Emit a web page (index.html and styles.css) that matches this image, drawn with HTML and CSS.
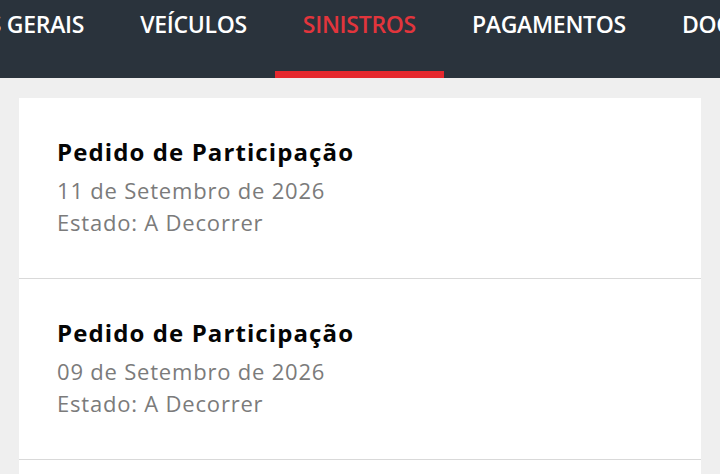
FILE: index.html
```html
<!DOCTYPE html>
<html lang="pt">
<head>
<meta charset="utf-8">
<title>Sinistros</title>
<link rel="stylesheet" href="styles.css">
</head>
<body>
<nav class="tabs">
  <div class="tab-strip">
    <a class="tab">DADOS GERAIS</a>
    <a class="tab">VEÍCULOS</a>
    <a class="tab active">SINISTROS</a>
    <a class="tab">PAGAMENTOS</a>
    <a class="tab">DOCUMENTOS</a>
  </div>
</nav>
<main class="content">
  <section class="card">
    <article class="item">
      <h2 class="item-title">Pedido de Participação</h2>
      <p class="item-line">11 de Setembro de 2026</p>
      <p class="item-line">Estado: A Decorrer</p>
    </article>
    <article class="item">
      <h2 class="item-title">Pedido de Participação</h2>
      <p class="item-line">09 de Setembro de 2026</p>
      <p class="item-line">Estado: A Decorrer</p>
    </article>
    <article class="item">
      <h2 class="item-title">Pedido de Participação</h2>
      <p class="item-line">02 de Setembro de 2026</p>
      <p class="item-line">Estado: A Decorrer</p>
    </article>
  </section>
</main>
</body>
</html>
```

FILE: styles.css
```css
* { box-sizing: border-box; }
html, body { margin: 0; padding: 0; }
body {
  width: 720px;
  height: 474px;
  overflow: hidden;
  background: #efefef;
  font-family: "Open Sans", "Noto Sans", sans-serif;
}
.tabs {
  height: 78px;
  background: #2a333c;
  overflow: hidden;
}
.tab-strip {
  display: flex;
  margin-left: -105px;
  height: 78px;
}
.tab {
  flex: none;
  display: block;
  height: 78px;
  padding: 9px 28px 0;
  color: #ffffff;
  font-size: 23px;
  font-weight: 600;
  letter-spacing: -0.3px;
  line-height: 30px;
  white-space: nowrap;
}
.tab.active {
  color: #e2353c;
  border-bottom: 7px solid #e5282e;
}
.content {
  padding: 20px 19px 0;
}
.card {
  background: #ffffff;
}
.item {
  height: 181px;
  padding: 39px 38px 0;
  border-bottom: 1px solid #d9d9d9;
}
.item-title {
  margin: 0 0 7px;
  font-size: 24px;
  font-weight: 700;
  letter-spacing: 1.1px;
  line-height: 30px;
  color: #050505;
}
.item-line {
  margin: 0;
  font-size: 22px;
  letter-spacing: 0.8px;
  line-height: 32px;
  color: #7b7b7b;
}
```
